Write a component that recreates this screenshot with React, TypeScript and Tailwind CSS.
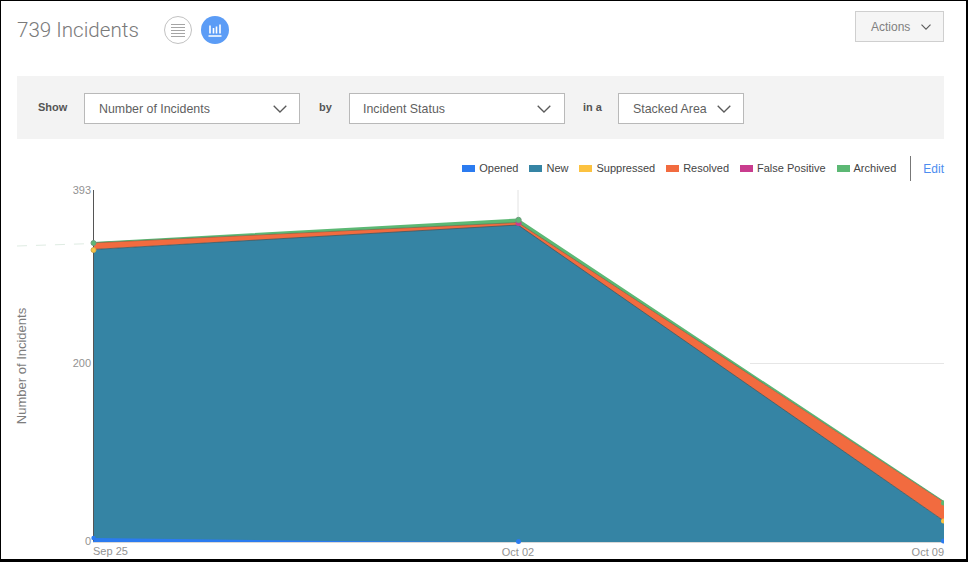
import React from "react";

const Chevron = ({ w = 14, h = 8, sw = 1.3 }: { w?: number; h?: number; sw?: number }) => (
  <svg width={w} height={h} viewBox="0 0 14 8" fill="none" stroke="#5a5a5a" strokeWidth={sw}>
    <path d="M0.7 0.7 L7 7 L13.3 0.7" />
  </svg>
);

const Select = ({ label, cls }: { label: string; cls: string }) => (
  <div className={`h-[31px] bg-white border border-[#b9b9b9] flex items-center justify-between text-[12.4px] text-[#5f5f5f] ${cls}`}>
    <span className="pt-[1px]">{label}</span>
    <Chevron />
  </div>
);

const legend = [
  ["Opened", "bg-[#2b7bf0]"],
  ["New", "bg-[#3584a4]"],
  ["Suppressed", "bg-[#fcc240]"],
  ["Resolved", "bg-[#f26b3f]"],
  ["False Positive", "bg-[#c93c8e]"],
  ["Archived", "bg-[#5cb874]"],
];

const Chart = () => (
  <svg width="965" height="375" viewBox="1 184 965 375" className="block" fontFamily="'Liberation Sans', Arial, sans-serif">
    <defs>
      <clipPath id="plot">
        <rect x="0" y="184" width="944" height="375" />
      </clipPath>
    </defs>
    <line x1="518" y1="190" x2="518" y2="222" stroke="#e2e2e2" />
    <line x1="750" y1="363.5" x2="944" y2="363.5" stroke="#e6e6e6" />
    <line x1="93" y1="542.5" x2="944" y2="542.5" stroke="#d8d8d8" />
    <line x1="17" y1="246" x2="93" y2="243.5" stroke="#dfece3" strokeDasharray="10 9" />
    <g clipPath="url(#plot)">
      <polygon points="93,249.5 518,224 944,521 944,542 93,542" fill="#3584a4" />
      <polygon points="93,538 330,541 518,542 93,542" fill="#2b7bf0" />
      <polygon points="93,242.5 518,222 944,502 944,521 518,225 93,249.5" fill="#f26b3f" />
      <polyline points="93,249.5 518,225 944,521" fill="none" stroke="#3d5a63" strokeWidth="0.8" />
      <polygon points="93,242 518,218.5 944,501 944,502 518,222.5 93,242.8" fill="#5cb874" />
      <polyline points="93,242.8 518,222.5 944,502" fill="none" stroke="#5a5a44" strokeWidth="0.5" />
      <circle cx="518.5" cy="223" r="3" fill="#c93c8e" />
      <circle cx="518.5" cy="220" r="2.7" fill="#5cb874" stroke="#6d9c7c" />
      <circle cx="518.5" cy="541.5" r="2.5" fill="#2b7bf0" />
      <circle cx="943.5" cy="503" r="2.5" fill="#5cb874" />
      <circle cx="943.5" cy="521" r="2.5" fill="#fcc240" />
      <circle cx="943.5" cy="541" r="2.5" fill="#2b7bf0" />
    </g>
    <line x1="93.5" y1="190" x2="93.5" y2="541" stroke="#555" />
    <circle cx="93.5" cy="243" r="2.5" fill="#5cb874" stroke="#6d9c7c" />
    <circle cx="93.5" cy="250" r="2.5" fill="#fcc240" stroke="#c9a84e" />
    <circle cx="93.5" cy="538" r="2.2" fill="#2b7bf0" />
    <g fontSize="11" fill="#929292">
      <text x="91" y="194" textAnchor="end">393</text>
      <text x="91" y="367" textAnchor="end">200</text>
      <text x="91" y="545" textAnchor="end">0</text>
      <text x="93" y="555">Sep 25</text>
      <text x="518" y="556" textAnchor="middle">Oct 02</text>
      <text x="944" y="556" textAnchor="end">Oct 09</text>
    </g>
    <text x="0" y="0" fontSize="13" fill="#7d7d7d" textAnchor="middle" transform="translate(26 366) rotate(-90)">Number of Incidents</text>
  </svg>
);

export default function App() {
  return (
    <div className="w-[968px] h-[562px] bg-black pt-px pl-px pr-[2px] pb-[3px] overflow-hidden" style={{ fontFamily: "'Liberation Sans', Arial, sans-serif" }}>
      <div className="h-full bg-white flex flex-col">
        <div className="h-[75px] flex items-start justify-between pl-4 pr-[22px] shrink-0">
          <div className="flex items-center pt-[15px]">
            <h1 className="text-[20.6px] leading-[28px] w-[147px] text-[#7a7a7a] font-light" style={{ fontFamily: "Roboto, sans-serif" }}>739 Incidents</h1>
            <div className="w-7 h-7 rounded-full border-[1.5px] border-[#c2c2c2] flex flex-col items-center justify-center gap-[2px]">
              {[0, 1, 2, 3, 4].map((i) => (
                <div key={i} className="w-[14px] h-px bg-[#a5a5a5]" />
              ))}
            </div>
            <div className="w-7 h-7 rounded-full bg-[#5b9cf6] ml-[9px] flex items-center justify-center">
              <svg width="14" height="14" viewBox="0 0 14 14" stroke="#fff" fill="none" strokeWidth="1.6">
                <path d="M2 2.5V10.5M5.5 5V10.5M8.5 3.5V10.5M12 1.5V10.5M0.5 13H13.5" />
              </svg>
            </div>
          </div>
          <div className="mt-[10px] w-[89px] h-[31px] bg-[#f5f5f5] border border-[#cfcfcf] flex items-center justify-between pl-[15px] pr-[12px] text-[12px] text-[#808080]">
            <span>Actions</span>
            <Chevron w={10} h={6} sw={1.6} />
          </div>
        </div>
        <div className="mx-4 mr-[22px] h-[63px] bg-[#f3f3f3] flex items-center shrink-0 pt-[2px]">
          <span className="ml-[21px] w-[46px] -mt-[2px] text-[11px] font-bold text-[#555]">Show</span>
          <Select label="Number of Incidents" cls="w-[216px] pl-[14px] pr-[12px]" />
          <span className="ml-[19px] w-[30px] -mt-[2px] text-[11px] font-bold text-[#555]">by</span>
          <Select label="Incident Status" cls="w-[216px] pl-[13px] pr-[13px]" />
          <span className="ml-[18px] w-[35px] -mt-[2px] text-[11px] font-bold text-[#555]">in a</span>
          <Select label="Stacked Area" cls="w-[126px] pl-[14px] pr-[12px]" />
        </div>
        <div className="h-[45px] shrink-0 flex items-start justify-end pr-[22px] pt-[17px]">
          <div className="flex items-center h-[25px]">
            <div className="flex items-center gap-[11px] pb-[1px]">
              {legend.map(([name, c]) => (
                <div key={name} className="flex items-center gap-[4px] text-[11px] text-[#444]">
                  <span className={`w-[13px] h-[7px] ${c}`} />
                  <span>{name}</span>
                </div>
              ))}
            </div>
            <div className="w-px h-[25px] bg-[#777] ml-[14px] mr-[12px]" />
            <span className="text-[12px] text-[#4c8df0]">Edit</span>
          </div>
        </div>
        <Chart />
      </div>
    </div>
  );
}
